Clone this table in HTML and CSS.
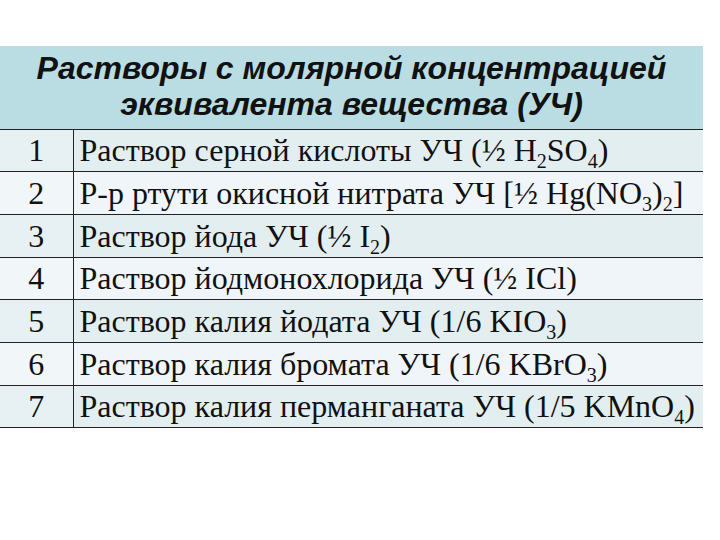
FILE: index.html
```html
<!DOCTYPE html>
<html lang="ru">
<head>
<meta charset="utf-8">
<link rel="stylesheet" href="styles.css">
</head>
<body>
<table class="solutions">
  <colgroup>
    <col class="col-num">
    <col class="col-name">
  </colgroup>
  <thead>
    <tr>
      <th colspan="2" class="title">Растворы с молярной концентрацией<br>эквивалента вещества (УЧ)</th>
    </tr>
  </thead>
  <tbody>
    <tr class="odd"><td class="num">1</td><td class="name">Раствор серной кислоты УЧ (½ H<sub>2</sub>SO<sub>4</sub>)</td></tr>
    <tr class="even"><td class="num">2</td><td class="name">Р-р ртути окисной нитрата УЧ [½ Hg(NO<sub>3</sub>)<sub>2</sub>]</td></tr>
    <tr class="odd"><td class="num">3</td><td class="name">Раствор йода УЧ (½ I<sub>2</sub>)</td></tr>
    <tr class="even"><td class="num">4</td><td class="name">Раствор йодмонохлорида УЧ (½ ICl)</td></tr>
    <tr class="odd"><td class="num">5</td><td class="name">Раствор калия йодата УЧ (1/6 KIO<sub>3</sub>)</td></tr>
    <tr class="even"><td class="num">6</td><td class="name">Раствор калия бромата УЧ (1/6 KBrO<sub>3</sub>)</td></tr>
    <tr class="odd"><td class="num">7</td><td class="name">Раствор калия перманганата УЧ (1/5 KMnO<sub>4</sub>)</td></tr>
  </tbody>
</table>
</body>
</html>
```
FILE: styles.css
```css
html, body {
  margin: 0;
  padding: 0;
  background: #ffffff;
}
.solutions {
  margin-top: 46px;
  width: 703px;
  border-collapse: collapse;
  table-layout: fixed;
}
.col-num { width: 73px; }
.title {
  background: #b9dde3;
  font-family: "Liberation Sans", Arial, sans-serif;
  font-weight: bold;
  font-style: italic;
  font-size: 32px;
  line-height: 36px;
  color: #111;
  height: 83px;
  padding: 4px 0 0 0;
  box-sizing: border-box;
  vertical-align: top;
  border-bottom: 1px solid #222;
  text-align: center;
}
.solutions td {
  font-family: "Liberation Serif", "Times New Roman", serif;
  font-size: 32px;
  color: #111;
  height: 41.7px;
  padding: 0;
  border-bottom: 1px solid #222;
  white-space: nowrap;
  line-height: 32px;
}
.num {
  text-align: center;
  border-right: 1px solid #222;
}
.solutions td.name {
  padding-left: 6px;
}
.odd td { background: #e3eef1; }
.even td { background: #eff5f8; }
.odd td.num { background: #e7f1f3; }
.even td.num { background: #f1f6f8; }
sub {
  font-size: 20px;
  vertical-align: -7px;
  line-height: 0;
}
```
